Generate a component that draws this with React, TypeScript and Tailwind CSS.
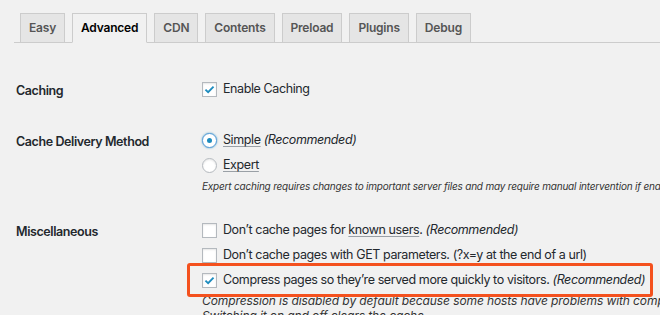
import React from "react";

const tabs = ["Easy", "Advanced", "CDN", "Contents", "Preload", "Plugins", "Debug"];

function Checkbox({ checked }: { checked?: boolean }) {
  return (
    <span className="inline-flex h-[15px] w-[15px] shrink-0 items-center justify-center border border-[#b4b9be] bg-white shadow-[inset_0_1px_2px_rgba(0,0,0,0.1)]">
      {checked && (
        <svg viewBox="0 0 16 16" className="h-[13px] w-[13px]">
          <path d="M3 8.2 L6.3 11.4 L13 4.4" fill="none" stroke="#1e8cbe" strokeWidth="2.3" />
        </svg>
      )}
    </span>
  );
}

function Radio({ checked }: { checked?: boolean }) {
  return (
    <span
      className={
        checked
          ? "inline-flex h-[15px] w-[15px] shrink-0 items-center justify-center rounded-full border border-[#5b9dd9] bg-white shadow-[0_0_2px_rgba(30,140,190,0.8)]"
          : "inline-flex h-[15px] w-[15px] shrink-0 items-center justify-center rounded-full border border-[#b4b9be] bg-white shadow-[inset_0_1px_2px_rgba(0,0,0,0.1)]"
      }
    >
      {checked && <span className="h-[5px] w-[5px] rounded-full bg-[#1e8cbe]" />}
    </span>
  );
}

function Line({ children }: { children: React.ReactNode }) {
  return <div className="flex h-[25px] items-center gap-[6px] whitespace-nowrap">{children}</div>;
}

function Label({ children }: { children: React.ReactNode }) {
  return (
    <div className="flex h-[25px] w-[202px] shrink-0 items-center pl-[16px] pt-[3px] font-semibold text-[#23282d]">
      {children}
    </div>
  );
}

const u = "underline decoration-[#9aa0a6] underline-offset-2";

export default function App() {
  return (
    <div
      className="h-[315px] w-[660px] overflow-hidden bg-[#f1f1f1] text-[12.5px] tracking-[-0.4px] text-[#23282d]"
      style={{ fontFamily: "Inter, 'Liberation Sans', sans-serif" }}
    >
      {/* Tabs */}
      <div className="ml-[14px] flex gap-[7px] border-b border-[#ccc] pl-[6px] pt-[13px] tracking-[-0.2px]">
        {tabs.map((t) =>
          t === "Advanced" ? (
            <div
              key={t}
              className="-mb-px flex h-[30px] items-center border border-[#ccc] border-b-[#f1f1f1] bg-[#f1f1f1] px-[8px] text-[12px] font-semibold text-black"
            >
              {t}
            </div>
          ) : (
            <div
              key={t}
              className="flex h-[29px] items-center border border-b-0 border-[#ccc] bg-[#e5e5e5] px-[8px] text-[12px] font-semibold text-[#555]"
            >
              {t}
            </div>
          )
        )}
      </div>

      {/* Caching */}
      <div className="mt-[34px] flex">
        <Label>Caching</Label>
        <div>
          <Line>
            <Checkbox checked />
            <span>Enable Caching</span>
          </Line>
        </div>
      </div>

      {/* Cache Delivery Method */}
      <div className="mt-[26px] flex">
        <Label>Cache Delivery Method</Label>
        <div>
          <Line>
            <Radio checked />
            <span>
              <span className={u}>Simple</span> <em>(Recommended)</em>
            </span>
          </Line>
          <Line>
            <Radio />
            <span className={u}>Expert</span>
          </Line>
          <p className="h-[16px] whitespace-nowrap text-[10px] leading-[16px] tracking-[-0.2px] text-[#333] italic">
            Expert caching requires changes to important server files and may require manual intervention if enabled.
          </p>
        </div>
      </div>

      {/* Miscellaneous */}
      <div className="mt-[24px] flex">
        <Label>Miscellaneous</Label>
        <div>
          <Line>
            <Checkbox />
            <span>
              Don’t cache pages for <span className={u}>known users</span>. <em>(Recommended)</em>
            </span>
          </Line>
          <Line>
            <Checkbox />
            <span>Don’t cache pages with GET parameters. (?x=y at the end of a url)</span>
          </Line>
          <div className="relative">
            <Line>
              <Checkbox checked />
              <span>
                Compress pages so they’re served more quickly to visitors. <em>(Recommended)</em>
              </span>
            </Line>
            <span className="pointer-events-none absolute left-[-15px] top-[-5px] h-[34px] w-[466px] rounded-[3px] border-[3px] border-[#f4511e]" />
          </div>
          <p className="whitespace-nowrap text-[12px] leading-[15px] tracking-[-0.1px] text-[#333] italic">
            Compression is disabled by default because some hosts have problems with compressed files.
            <br />
            Switching it on and off clears the cache.
          </p>
        </div>
      </div>
    </div>
  );
}
